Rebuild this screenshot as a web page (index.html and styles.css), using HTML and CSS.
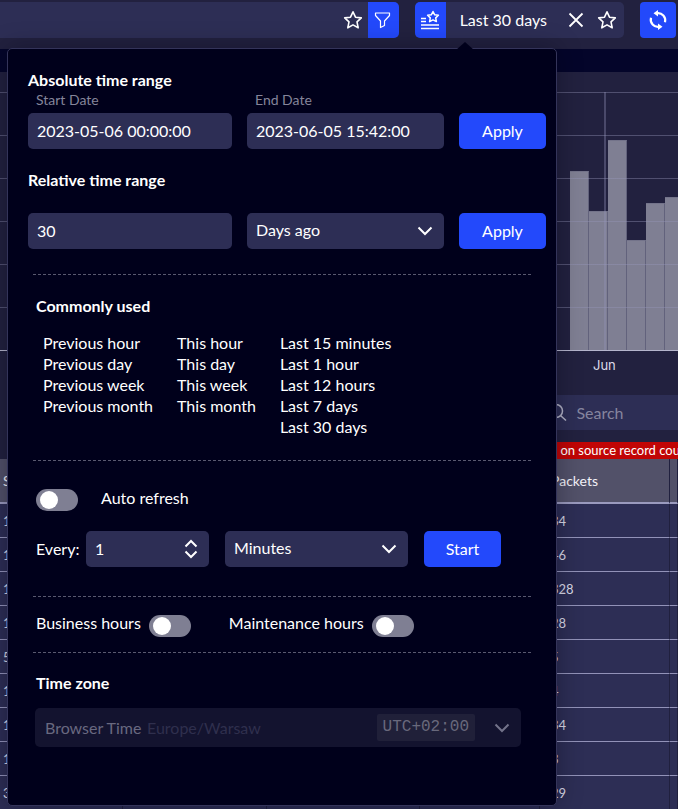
FILE: index.html
```html
<!DOCTYPE html>
<html lang="en">
<head>
<meta charset="utf-8">
<meta name="viewport" content="width=device-width, initial-scale=1">
<title>Time range</title>
<link rel="stylesheet" href="styles.css">
</head>
<body>
<svg class="defs" aria-hidden="true">
  <symbol id="star" viewBox="0 0 20 20"><path d="M10 1.800l2.500 5.400 5.800.7-4.300 4 1.200 5.900L10 14.900l-5.200 2.900L6 11.900l-4.300-4 5.800-.7z" fill="none" stroke="currentColor" stroke-width="1.600" stroke-linejoin="round"/></symbol>
  <symbol id="chevron" viewBox="0 0 16 10"><path d="M1.500 1.500L8 8l6.500-6.500" fill="none" stroke="currentColor" stroke-width="2"/></symbol>
</svg>

<header class="topbar">
  <div class="filter-bar">
    <button class="icon-btn" aria-label="Favourite filters"><svg width="20" height="20"><use href="#star"/></svg></button>
    <button class="blue end" aria-label="Filter">
      <svg width="18" height="18" viewBox="0 0 18 18" fill="none" stroke="currentColor" stroke-width="1.200" stroke-linejoin="round"><path d="M1.500 2h14v2.500l-5 5.500v4.500l-4 2V10l-5-5.500z"/></svg>
    </button>
  </div>
  <div class="range-bar">
    <button class="blue start" aria-label="Saved ranges">
      <svg width="20" height="20" viewBox="0 0 20 20" fill="none" stroke="currentColor" stroke-width="1.500"><path d="M1 8.500h5M1 11.500h5M1 15h18M1 18.500h18"/><path d="M13 1.500l1.700 3.300 3.700.5-2.700 2.600.7 3.700-3.400-1.700-3.400 1.700.7-3.700-2.700-2.600 3.700-.5z" stroke-linejoin="round"/></svg>
    </button>
    <span class="range-name">Last 30 days</span>
    <button class="icon-btn" aria-label="Clear"><svg width="16" height="16" viewBox="0 0 16 16"><path d="M1.500 1.500l13 13M14.500 1.500l-13 13" stroke="currentColor" stroke-width="1.800"/></svg></button>
    <button class="icon-btn" aria-label="Favourite range"><svg width="20" height="20"><use href="#star"/></svg></button>
  </div>
  <button class="blue refresh" aria-label="Refresh">
    <svg width="20" height="20" viewBox="0 0 20 20"><path d="M9 3.200C14 2.500 18.300 7 17 12.200M11 16.800C6 17.500 1.700 13 3 7.800" fill="none" stroke="currentColor" stroke-width="2.200"/><path d="M10 0v6.500L5.500 3.200zM10 20v-6.500l4.500 3.300z" fill="currentColor"/></svg>
  </button>
</header>

<main>
  <div class="strip"></div>
  <section class="chart" aria-label="Traffic by day">
    <div class="plot">
      <div class="bars">
        <i style="height:179px"></i><i style="height:139px"></i><i style="height:210px"></i><i style="height:110px"></i><i style="height:147px"></i><i style="height:153px"></i>
      </div>
      <div class="lines"></div>
      <div class="month"></div>
    </div>
    <div class="axis">Jun</div>
  </section>

  <div class="tools">
    <label class="search">
      <svg width="20" height="20" viewBox="0 0 20 20" fill="none" stroke="currentColor" stroke-width="1.500"><circle cx="9" cy="8" r="6.500"/><path d="M13.500 12.500l5.500 5"/></svg>
      <input type="search" placeholder="Search" aria-label="Search">
    </label>
    <p class="notice">on source record count</p>
  </div>

  <table>
    <colgroup><col class="c1"><col class="c2"><col class="c3"><col class="c4"><col class="c5"><col></colgroup>
    <thead><tr><th>S</th><th></th><th></th><th></th><th>Packets</th><th></th></tr></thead>
    <tbody>
      <tr><td>1</td><td></td><td></td><td></td><td>34</td><td></td></tr>
      <tr><td>1</td><td></td><td></td><td></td><td>46</td><td></td></tr>
      <tr><td>1</td><td></td><td></td><td></td><td>328</td><td></td></tr>
      <tr><td>1</td><td></td><td></td><td></td><td>28</td><td></td></tr>
      <tr><td>5</td><td></td><td></td><td></td><td>5</td><td></td></tr>
      <tr><td>1</td><td></td><td></td><td></td><td>4</td><td></td></tr>
      <tr><td>1</td><td></td><td></td><td></td><td>34</td><td></td></tr>
      <tr><td>1</td><td></td><td></td><td></td><td>3</td><td></td></tr>
      <tr><td>3</td><td></td><td></td><td></td><td>29</td><td></td></tr>
    </tbody>
  </table>
</main>

<section class="popover" aria-label="Time range">
  <form class="ranges">
    <h2>Absolute time range</h2>
    <div class="fields">
      <label class="caption" for="from">Start Date</label>
      <label class="caption" for="to">End Date</label>
      <span></span>
      <input class="field" id="from" type="text" value="2023-05-06 00:00:00">
      <input class="field" id="to" type="text" value="2023-06-05 15:42:00">
      <button class="action" type="button">Apply</button>
    </div>
    <h2 class="relative">Relative time range</h2>
    <div class="fields">
      <input class="field" type="text" value="30" aria-label="Amount">
      <div class="select">
        <select class="field" aria-label="Unit"><option>Days ago</option></select>
        <svg width="16" height="10"><use href="#chevron"/></svg>
      </div>
      <button class="action" type="button">Apply</button>
    </div>
  </form>

  <div class="block common">
    <h2>Commonly used</h2>
    <div class="links">
      <ul><li><a href="#">Previous hour</a></li><li><a href="#">Previous day</a></li><li><a href="#">Previous week</a></li><li><a href="#">Previous month</a></li></ul>
      <ul><li><a href="#">This hour</a></li><li><a href="#">This day</a></li><li><a href="#">This week</a></li><li><a href="#">This month</a></li></ul>
      <ul><li><a href="#">Last 15 minutes</a></li><li><a href="#">Last 1 hour</a></li><li><a href="#">Last 12 hours</a></li><li><a href="#">Last 7 days</a></li><li><a href="#">Last 30 days</a></li></ul>
    </div>
  </div>

  <div class="block auto">
    <div class="auto-head">
      <input class="toggle" id="auto" type="checkbox" role="switch">
      <label for="auto">Auto refresh</label>
    </div>
    <div class="every">
      <label for="every">Every:</label>
      <div class="select count">
        <input class="field" id="every" type="text" value="1">
        <svg width="14" height="20" viewBox="0 0 14 20" fill="none" stroke="currentColor" stroke-width="2"><path d="M1.500 7.500L7 2l5.500 5.500M1.500 12.500L7 18l5.500-5.500"/></svg>
      </div>
      <div class="select unit">
        <select class="field" aria-label="Refresh unit"><option>Minutes</option></select>
        <svg width="16" height="10"><use href="#chevron"/></svg>
      </div>
      <button class="action begin" type="button">Start</button>
    </div>
  </div>

  <div class="block hours">
    <label for="business">Business hours</label>
    <input class="toggle" id="business" type="checkbox" role="switch">
    <label class="second" for="maintenance">Maintenance hours</label>
    <input class="toggle" id="maintenance" type="checkbox" role="switch">
  </div>

  <div class="block zone">
    <h2>Time zone</h2>
    <div class="zone-box">
      <select disabled aria-label="Time zone"><option>Browser Time</option></select>
      <span class="place">Europe/Warsaw</span>
      <span class="offset">UTC+02:00</span>
      <svg width="16" height="10"><use href="#chevron"/></svg>
    </div>
  </div>
</section>
</body>
</html>
```

FILE: styles.css
```css
* { box-sizing: border-box; }

body {
  margin: 0;
  min-height: 100vh;
  position: relative;
  overflow: hidden;
  background: #22213f;
  color: #fff;
  font: 16px/20px Lato, "Liberation Sans", sans-serif;
}

h2, p, ul { margin: 0; padding: 0; }
h2 { font-size: 16px; line-height: 20px; font-weight: 700; }
ul { list-style: none; }
a { color: inherit; text-decoration: none; }
button, input, select { font: inherit; color: inherit; border: 0; margin: 0; }
button { padding: 0; cursor: pointer; }
svg { display: block; flex: none; }
.defs { position: absolute; width: 0; height: 0; }

/* Top bar */
.topbar {
  display: flex;
  gap: 16px;
  height: 49px;
  padding: 2px 2px 11px 0;
}
.filter-bar, .range-bar {
  display: flex;
  align-items: center;
  background: #2d2e55;
  border-radius: 5px;
}
.filter-bar { flex: 1; justify-content: flex-end; gap: 5px; border-radius: 0 5px 5px 0; }
.range-bar { padding-right: 7px; }
.icon-btn { background: none; display: grid; place-items: center; }
.blue {
  background: #2349fb;
  width: 31px;
  height: 36px;
  display: grid;
  place-items: center;
}
.start { border-radius: 5px 0 0 5px; }
.end { border-radius: 0 5px 5px 0; }
.refresh { width: 36px; border-radius: 4px; }
.range-name { padding: 0 21px 0 14px; }
.range-bar .icon-btn + .icon-btn { margin-left: 13px; }

/* Chart */
.strip { height: 23px; background: #04052a; }
.chart { padding-top: 20px; height: 323px; }
.plot { display: grid; height: 259px; border-bottom: 1px solid #b5b5cc; }
.plot > * { grid-area: 1 / 1; }
.bars { display: flex; align-items: flex-end; padding-left: 570px; overflow: hidden; }
.bars i {
  flex: 0 0 19px;
  background: #7f7f93;
  border-right: 1px solid #62627c;
  border-top: 1px solid #73738a;
}
.lines { background: repeating-linear-gradient(rgba(150, 150, 185, .4) 0 1px, transparent 1px 43px); }
.month { margin-left: 604px; width: 2px; background: rgba(150, 150, 185, .35); }
.axis { padding: 4px 0 0 593px; font: 13px/20px Inter, sans-serif; color: #dcdcea; }

/* Search and notice */
.tools { padding-left: 80%; height: 64px; }
.search {
  display: flex;
  align-items: center;
  gap: 9px;
  height: 35px;
  padding-left: 5px;
  background: #2d2e55;
  color: #b3b3c6;
}
.search input { flex: 1; min-width: 0; padding: 0; background: none; outline: 0; }
.search input::placeholder { color: #85859f; opacity: 1; }
.notice {
  margin-top: 12px;
  height: 17px;
  padding-left: 18px;
  background: #c10505;
  overflow: hidden;
  white-space: nowrap;
  font-size: 13px;
  line-height: 17px;
}

/* Table */
table {
  width: 100%;
  table-layout: fixed;
  border-collapse: separate;
  border-spacing: 0;
  font-size: 13px;
  line-height: 16px;
  color: #dadae8;
}
.c1 { width: 123px; }
.c2 { width: 144px; }
.c3 { width: 153px; }
.c4 { width: 120px; }
.c5 { width: 130px; }
th, td {
  padding: 0 11px;
  text-align: left;
  border-right: 1px solid #20203e;
  border-bottom: 1px solid #9292b8;
}
th:first-child, td:first-child { padding-left: 3px; }
th { height: 45px; font-size: 14px; font-weight: 400; background: #525169; border-bottom: 2px solid #9a9abe; color: #f2f2f8; }
td { height: 34px; background: #2d2e55; }

/* Popover */
.popover {
  position: absolute;
  top: 48px;
  left: 7px;
  width: 550px;
  height: 758px;
  padding: 21px 10px 0 20px;
  background: #00001b;
  border: 1px solid #34345a;
  border-radius: 5px;
  box-shadow: 0 0 24px rgba(0, 0, 20, .35);
}
.popover::before {
  content: "";
  position: absolute;
  top: -7px;
  left: 448px;
  width: 18px;
  height: 8px;
  background: #00001b;
  clip-path: polygon(50% 0, 100% 100%, 0 100%);
}
.fields { display: grid; grid-template-columns: 204fr 197fr 87fr; column-gap: 15px; }
.caption { padding-left: 8px; font-size: 14px; line-height: 20px; color: #85859a; }
.fields .caption { margin-bottom: 3px; }
.relative { margin: 21px 0 23px; }
.field {
  display: block;
  width: 100%;
  min-width: 0;
  height: 36px;
  padding: 0 9px 2px;
  background: #2d2e55;
  border-radius: 5px;
  appearance: none;
}
.action { height: 36px; border-radius: 5px; background: #2349fb; }
.select { display: grid; align-items: center; }
.select > * { grid-area: 1 / 1; }
.select > svg { justify-self: end; margin-right: 11px; pointer-events: none; }

.block { margin: 0 14px 0 5px; padding-left: 3px; }
.block::before {
  content: "";
  display: block;
  height: 1px;
  margin-left: -3px;
  background: repeating-linear-gradient(90deg, #59596f 0 3px, transparent 3px 5px);
}
.common { margin-top: 25px; height: 186px; }
.common h2 { margin-top: 21px; }
.links { display: flex; gap: 24px; padding: 16px 0 0 7px; line-height: 21px; }

.auto { height: 136px; }
.auto-head { display: flex; gap: 23px; margin-top: 28px; height: 22px; line-height: 18px; }
.every { display: flex; align-items: center; gap: 16px; margin-top: 20px; }
.every label { width: 50px; margin-right: -16px; }
.count { width: 123px; }
.unit { width: 183px; }
.begin { width: 77px; }

.toggle {
  appearance: none;
  flex: none;
  width: 42px;
  height: 22px;
  padding: 2px 4px;
  border-radius: 11px;
  background: #7f7f93;
}
.toggle::before {
  content: "";
  display: block;
  width: 18px;
  height: 18px;
  border-radius: 50%;
  background: #fff;
}
.toggle:checked { background: #2349fb; }
.toggle:checked::before { margin-left: auto; }

.hours { display: flex; flex-wrap: wrap; align-content: flex-start; gap: 0 8px; height: 56px; }
.hours::before { flex: 0 0 calc(100% + 3px); }
.hours label { margin-top: 16px; }
.hours .toggle { margin-top: 18px; }
.hours .second { margin-left: 30px; }

.zone h2 { margin-top: 20px; }
.zone-box {
  display: flex;
  align-items: center;
  height: 39px;
  margin: 15px 11px 0 -1px;
  padding: 0 11px 0 10px;
  border-radius: 5px;
  background: #13132f;
  color: #73738a;
}
.zone-box select { appearance: none; padding: 0; background: none; opacity: 1; color: #696980; }
.place { margin-left: 4px; color: #2f2f4d; }
.offset {
  margin: 0 19px 0 auto;
  padding: 0 6px;
  border-radius: 2px;
  background: #202039;
  color: #69697c;
  font: 16px/27px "Liberation Mono", monospace;
}
```
